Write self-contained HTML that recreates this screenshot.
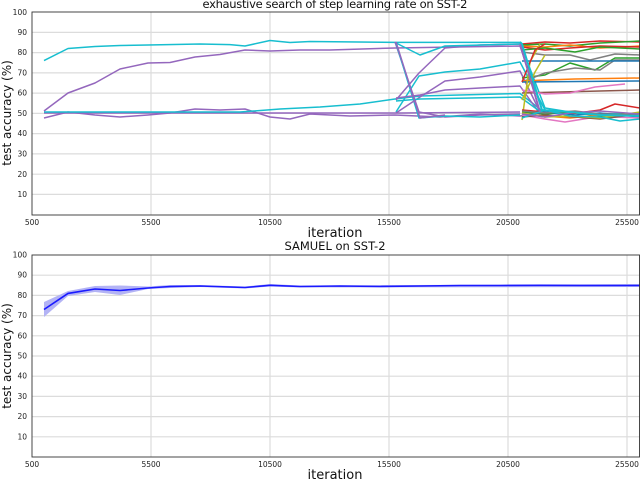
<!DOCTYPE html>
<html><head><meta charset="utf-8"><style>
html,body{margin:0;padding:0;background:#fff;width:640px;height:480px;overflow:hidden}
svg{display:block;font-family:"DejaVu Sans","Liberation Sans",sans-serif}
</style></head><body>
<svg width="640" height="480" viewBox="0 0 640 480" xmlns="http://www.w3.org/2000/svg">
<!-- TOP PLOT -->
<g stroke="#dcdcdc" stroke-width="1.2">
<line x1="32" x2="640" y1="32.4" y2="32.4"/><line x1="32" x2="640" y1="52.6" y2="52.6"/><line x1="32" x2="640" y1="72.9" y2="72.9"/><line x1="32" x2="640" y1="93.1" y2="93.1"/><line x1="32" x2="640" y1="113.4" y2="113.4"/><line x1="32" x2="640" y1="133.6" y2="133.6"/><line x1="32" x2="640" y1="153.9" y2="153.9"/><line x1="32" x2="640" y1="174.2" y2="174.2"/><line x1="32" x2="640" y1="194.4" y2="194.4"/>
<line x1="151" x2="151" y1="12" y2="215"/><line x1="270" x2="270" y1="12" y2="215"/><line x1="389" x2="389" y1="12" y2="215"/><line x1="508" x2="508" y1="12" y2="215"/><line x1="627" x2="627" y1="12" y2="215"/>
</g>
<g fill="none" stroke-width="1.5" stroke-linejoin="round">
<polyline stroke="#9467bd" points="44,113 400,113 520,112"/>
<polyline stroke="#9467bd" points="44,118 68,112 95,115 120,117 148,115 170,113 195,109 220,110 245,109 270,117 290,119 310,114 350,116 395,115 440,117 480,114 520,116 540,112"/>
<polyline stroke="#17becf" points="44,112 240,112 280,109 320,107 360,104 395,99 420,96 520,93.5 545,113"/>
<polyline stroke="#9467bd" points="44,111 68,93 95,83 120,69 148,63 170,62.5 195,57 220,54.5 245,50 270,51 300,50 330,50 395,48 520,46 542,110"/>
<polyline stroke="#17becf" points="44,60.6 68,48.5 95,46.5 120,45.5 148,45 200,44 230,44.6 245,46 270,40.5 290,42.5 310,41.5 395,42.4 520,42.4 545,108 570,112 600,114 640,113"/>
<polyline stroke="#9467bd" points="395,42 419,112 445,117 480,115 520,114"/>
<polyline stroke="#17becf" points="396,43 419,118 445,116 480,117 520,115"/>
<polyline stroke="#17becf" points="396,112 419,76 445,72 480,69 520,62 545,110"/>
<polyline stroke="#9467bd" points="396,100 419,73 445,48 480,45 520,44 540,112"/>
<polyline stroke="#17becf" points="396,43 420,55 445,46 520,44"/>
<polyline stroke="#9467bd" points="396,113 420,97 445,81 480,77 520,71 540,112"/>
<polyline stroke="#9467bd" points="396,98 420,95 445,90 480,88 520,86 540,114"/>
<polyline stroke="#17becf" points="396,101 420,99 520,97 545,115"/>
<polyline stroke="#9467bd" points="396,42 420,118 445,115"/>
<polyline stroke="#d62728" points="522,44 545,42 570,43 600,41 640,42"/>
<polyline stroke="#2ca02c" points="522,45 545,44 570,46 600,43 640,41"/>
<polyline stroke="#ff7f0e" points="522,46 545,47 570,45 600,48 640,46"/>
<polyline stroke="#d62728" points="522,47 545,50 570,48 600,46 640,47"/>
<polyline stroke="#2ca02c" points="522,50 545,48 575,52 600,47 640,49"/>
<polyline stroke="#7f7f7f" points="522,52 545,55 570,55 590,60 615,54 640,55"/>
<polyline stroke="#2ca02c" points="522,78 545,75 570,63 595,70 615,58 640,58"/>
<polyline stroke="#7f7f7f" points="522,82 545,73 575,68 600,70 615,60 640,60"/>
<polyline stroke="#1f77b4" points="522,61 640,61"/>
<polyline stroke="#ff7f0e" points="522,81 545,80 575,79 640,78"/>
<polyline stroke="#1f77b4" points="522,82 640,81"/>
<polyline stroke="#8c564b" points="522,93 560,92 600,91 640,90"/>
<polyline stroke="#e377c2" points="522,90 545,94 570,93 595,87 625,84"/>
<polyline stroke="#bcbd22" points="522,120 530,62 540,44"/>
<polyline stroke="#d62728" points="522,82 535,50 545,44"/>
<polyline stroke="#bcbd22" points="522,100 535,72 545,55"/>
<polyline stroke="#d62728" points="522,110 545,112 570,114 600,110 615,104 640,108"/>
<polyline stroke="#2ca02c" points="522,112 545,114 570,112 600,116 640,113"/>
<polyline stroke="#ff7f0e" points="522,114 545,116 570,118 600,115 640,116"/>
<polyline stroke="#1f77b4" points="522,116 545,112 575,115 600,113 640,117"/>
<polyline stroke="#e377c2" points="522,115 545,119 565,122 590,118 615,117 640,118"/>
<polyline stroke="#8c564b" points="522,117 545,115 575,117 600,119 640,114"/>
<polyline stroke="#bcbd22" points="522,113 545,117 570,116 600,118 640,112"/>
<polyline stroke="#7f7f7f" points="522,111 545,113 575,111 600,114 640,115"/>
<polyline stroke="#17becf" points="522,118 545,110 570,116 600,117 620,121 640,119"/>
<polyline stroke="#9467bd" points="522,114 545,117 570,113 600,111 640,114"/>
<polyline stroke="#17becf" points="520,42 522,44 542,110 570,112 600,115 640,116" stroke-width="2"/>
<polyline stroke="#9467bd" points="520,44 540,112" stroke-width="1.8"/>
</g>
<rect x="32" y="12" width="607.5" height="203" fill="none" stroke="#333" stroke-width="0.9"/>
<g font-size="7.5" fill="#222" text-anchor="end">
<text x="27" y="15">100</text><text x="27" y="35">90</text><text x="27" y="55">80</text><text x="27" y="75.5">70</text><text x="27" y="95.7">60</text><text x="27" y="116">50</text><text x="27" y="136.2">40</text><text x="27" y="156.5">30</text><text x="27" y="176.8">20</text><text x="27" y="197">10</text>
</g>
<g font-size="7.5" fill="#222" text-anchor="middle">
<text x="32" y="225">500</text><text x="151" y="225">5500</text><text x="270" y="225">10500</text><text x="389" y="225">15500</text><text x="508" y="225">20500</text><text x="627" y="225">25500</text>
</g>
<text x="335" y="8" font-size="11.5" text-anchor="middle" fill="#111" textLength="265">exhaustive search of step learning rate on SST-2</text>
<text x="335" y="237" font-size="13" text-anchor="middle" fill="#111">iteration</text>
<text transform="translate(11,113) rotate(-90)" font-size="12" text-anchor="middle" fill="#111">test accuracy (%)</text>

<!-- BOTTOM PLOT -->
<g stroke="#dcdcdc" stroke-width="1.2">
<line x1="32" x2="640" y1="275.2" y2="275.2"/><line x1="32" x2="640" y1="295.4" y2="295.4"/><line x1="32" x2="640" y1="315.6" y2="315.6"/><line x1="32" x2="640" y1="335.8" y2="335.8"/><line x1="32" x2="640" y1="356" y2="356"/><line x1="32" x2="640" y1="376.2" y2="376.2"/><line x1="32" x2="640" y1="396.4" y2="396.4"/><line x1="32" x2="640" y1="416.6" y2="416.6"/><line x1="32" x2="640" y1="436.8" y2="436.8"/>
<line x1="151" x2="151" y1="255" y2="457"/><line x1="270" x2="270" y1="255" y2="457"/><line x1="389" x2="389" y1="255" y2="457"/><line x1="508" x2="508" y1="255" y2="457"/><line x1="627" x2="627" y1="255" y2="457"/>
</g>
<polygon fill="#b3b3f5" points="44,302 68,291 95,286 120,285.5 148,286.5 170,285 200,285 245,286.5 270,284 300,285.5 640,284 640,287 300,287.5 270,286.5 245,288.5 200,287 170,288 148,289 120,295 95,292 68,296 44,317"/>
<polyline fill="none" stroke="#1a1aff" stroke-width="1.6" points="44,309.5 68,293.4 95,289 120,290.5 148,288 170,286.5 200,286 245,287.5 270,285.3 300,286.5 340,286 380,286.5 420,286 460,285.5 500,285.5 540,285.3 580,285.5 640,285.5"/>
<rect x="32" y="255" width="607.5" height="202" fill="none" stroke="#333" stroke-width="0.9"/>
<g font-size="7.5" fill="#222" text-anchor="end">
<text x="27" y="257.5">100</text><text x="27" y="277.7">90</text><text x="27" y="297.9">80</text><text x="27" y="318.1">70</text><text x="27" y="338.3">60</text><text x="27" y="358.5">50</text><text x="27" y="378.7">40</text><text x="27" y="398.9">30</text><text x="27" y="419.1">20</text><text x="27" y="439.3">10</text>
</g>
<g font-size="7.5" fill="#222" text-anchor="middle">
<text x="32" y="467">500</text><text x="151" y="467">5500</text><text x="270" y="467">10500</text><text x="389" y="467">15500</text><text x="508" y="467">20500</text><text x="627" y="467">25500</text>
</g>
<text x="335" y="250" font-size="11.5" text-anchor="middle" fill="#111">SAMUEL on SST-2</text>
<text x="335" y="479" font-size="13" text-anchor="middle" fill="#111">iteration</text>
<text transform="translate(11,356) rotate(-90)" font-size="12" text-anchor="middle" fill="#111">test accuracy (%)</text>
</svg>
</body></html>
